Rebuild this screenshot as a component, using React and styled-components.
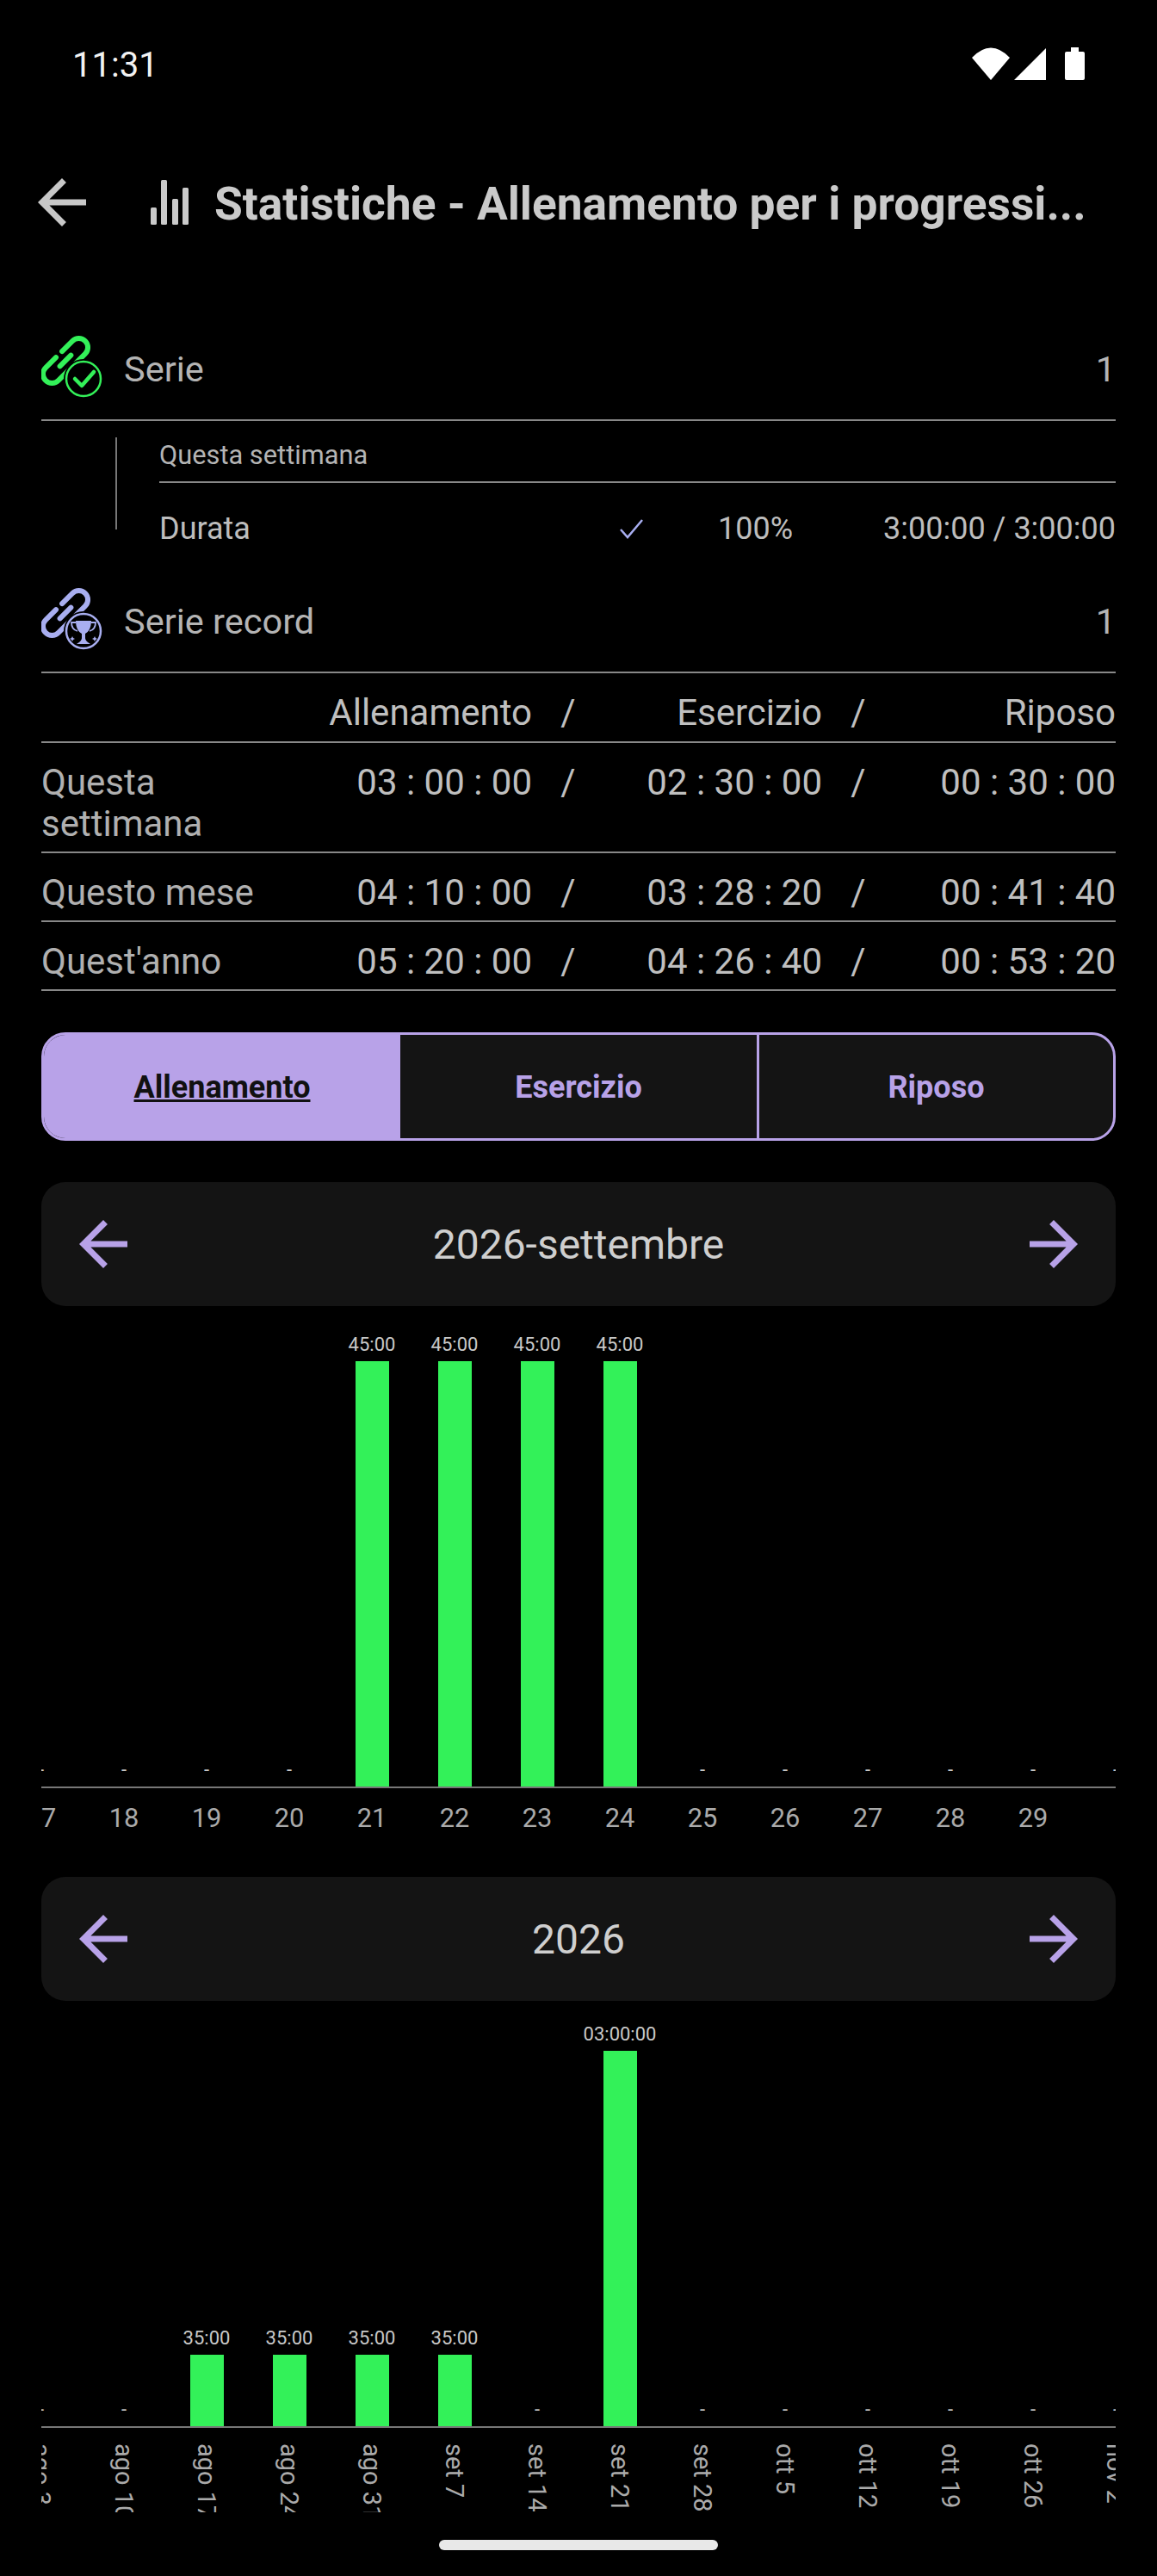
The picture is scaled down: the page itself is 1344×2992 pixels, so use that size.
import React from "react";
import styled, { createGlobalStyle } from "styled-components";

const Global = createGlobalStyle`
  html, body { margin: 0; padding: 0; background: #000; }
  body { font-family: Roboto, "Noto Sans", sans-serif; color: #c4c4c4; }
  * { box-sizing: border-box; }
`;

const Page = styled.div`
  width: 1344px;
  height: 2992px;
  background: #000;
  overflow: hidden;
  display: flex;
  flex-direction: column;
`;

const StatusBar = styled.div`
  height: 150px;
  padding: 0 84px;
  display: flex;
  align-items: center;
  justify-content: space-between;
  color: #f2f2f2;
  font-size: 40px;
`;

const StatusIcons = styled.svg`
  width: 131px;
  height: 150px;
  flex: none;
`;

const AppBar = styled.header`
  height: 172px;
  margin-bottom: 49px;
  padding: 0 0 2px 30px;
  display: flex;
  align-items: center;
`;

const TitleIcon = styled.svg`
  width: 48px;
  height: 52px;
  margin-left: 58px;
  flex: none;
`;

const Title = styled.h1`
  margin: 3px 0 0 29px;
  font-size: 53.3px;
  font-weight: 700;
  color: #cacaca;
  white-space: nowrap;
`;

const Content = styled.main`
  padding: 0 48px;
  display: flex;
  flex-direction: column;
`;

const StatRow = styled.div`
  height: 118px;
  padding-bottom: 1px;
  display: flex;
  align-items: center;
  border-bottom: 2px solid #888;
  font-size: 41.5px;
  color: #b4b4b4;
`;

const RowIcon = styled.svg`
  width: 76px;
  height: 116px;
  margin-right: 20px;
  flex: none;
`;

const RowValue = styled.span`
  margin-left: auto;
`;

const SubBlock = styled.section`
  padding: 19px 0 0 86px;
  display: flex;
  align-items: flex-start;
`;

const SubRule = styled.div`
  width: 2px;
  height: 107px;
  background: #777;
  flex: none;
`;

const SubBody = styled.div`
  margin-left: 49px;
  flex: 1;
`;

const SubHeader = styled.div`
  height: 53px;
  padding-bottom: 11px;
  display: flex;
  align-items: center;
  border-bottom: 2px solid #888;
  font-size: 30.8px;
  color: #b4b4b4;
`;

const DurationRow = styled.div`
  height: 103px;
  padding-top: 3px;
  display: flex;
  align-items: center;
  font-size: 36px;
  color: #bdbdbd;
`;

const DurationLabel = styled.span`
  width: 533px;
  flex: none;
`;

const CheckIcon = styled.svg`
  width: 30px;
  height: 26px;
  flex: none;
`;

const Percent = styled.span`
  margin-left: 86px;
`;

const Duration = styled.span`
  margin-left: auto;
`;

const TableRow = styled.div`
  display: grid;
  grid-template-columns: 290px 280px 84px 253px 84px 257px;
  padding: ${(p) => (p.$head ? "22px 0 9px" : "22px 0 8px")};
  border-bottom: 2px solid #888;
  font-size: 42px;
  line-height: 48px;
  color: #bfbfbf;
`;

const TableCell = styled.span`
  text-align: right;
  white-space: nowrap;
`;

const TableLabel = styled.span`
  color: #b0b0b0;
`;

const TableSlash = styled.span`
  text-align: center;
`;

const Segments = styled.div`
  margin-top: 48px;
  height: 126px;
  border: 3px solid #b8a2e8;
  border-radius: 28px;
  overflow: hidden;
  display: grid;
  grid-template-columns: repeat(3, 1fr);
  background: #141414;
`;

const Segment = styled.div`
  padding-top: 2px;
  display: flex;
  align-items: center;
  justify-content: center;
  font-size: 36px;
  font-weight: 700;
  background: ${(p) => (p.$active ? "#b8a2e8" : "transparent")};
  color: ${(p) => (p.$active ? "#111" : "#b8a2e8")};
  text-decoration: ${(p) => (p.$active ? "underline" : "none")};
  border-left: ${(p) => (p.$divider ? "3px solid #b8a2e8" : "none")};
`;

const NavBar = styled.div`
  margin-top: ${(p) => p.$top}px;
  height: 144px;
  padding: 0 30px;
  background: #141414;
  border-radius: 28px;
  display: flex;
  align-items: center;
  justify-content: space-between;
  font-size: 48px;
  color: #cfcfcf;
`;

const Arrow = styled.svg`
  width: 84px;
  height: 84px;
  color: ${(p) => p.$color};
  flex: none;
  display: block;
`;

const ChartClip = styled.div`
  overflow: hidden;
  width: 1248px;
`;

const Plot = styled.div`
  height: ${(p) => p.$h}px;
  width: 1344px;
  margin-left: -48px;
  display: grid;
  grid-template-columns: repeat(14, 96px);
  align-items: end;
  border-bottom: 2px solid #777;
  box-sizing: content-box;
`;

const Column = styled.div`
  display: flex;
  flex-direction: column;
  align-items: center;
  gap: 6px;
`;

const BarLabel = styled.span`
  font-size: 22px;
  line-height: 26px;
  color: #c8c8c8;
  white-space: nowrap;
`;

const Bar = styled.div`
  width: 39px;
  height: ${(p) => p.$h}px;
  background: #33f159;
`;

const Ticks = styled.div`
  width: 1344px;
  margin-left: -48px;
  display: grid;
  grid-template-columns: repeat(14, 96px);
  padding-top: ${(p) => p.$pad}px;
`;

const Tick = styled.span`
  text-align: center;
  font-size: 30.8px;
  line-height: 34px;
  color: #aaa;
`;

const VTick = styled.span`
  height: 80px;
  overflow: hidden;
  writing-mode: vertical-rl;
  justify-self: center;
  font-size: 29px;
  line-height: 34px;
  color: #aaa;
  white-space: nowrap;
`;

const HomeBar = styled.div`
  position: absolute;
  left: 510px;
  top: 2950px;
  width: 324px;
  height: 12px;
  border-radius: 6px;
  background: #e8e8e8;
`;

const ArrowLeft = ({ color }) => (
  <Arrow $color={color} viewBox="0 0 24 24" fill="currentColor">
    <path d="M20 11H7.83l5.59-5.59L12 4l-8 8 8 8 1.41-1.41L7.83 13H20v-2z" />
  </Arrow>
);

const ArrowRight = ({ color }) => (
  <Arrow $color={color} viewBox="0 0 24 24" fill="currentColor">
    <path d="M12 4l-1.41 1.41L16.17 11H4v2h12.17l-5.58 5.59L12 20l8-8z" />
  </Arrow>
);

const ChainLink = ({ color }) => (
  <g transform="translate(28 27) rotate(-45)" fill="none" stroke={color} strokeWidth="6" strokeLinecap="round">
    <path d="M5 -10.5H22A10.5 10.5 0 0 1 22 10.5H5" />
    <path d="M-5 -10.5H-22A10.5 10.5 0 0 0 -22 10.5H-5" />
    <path d="M-9 0H9" />
  </g>
);

const SeriesIcon = () => (
  <RowIcon viewBox="0 0 76 116">
    <g transform="translate(0 21)">
      <ChainLink color="#33f159" />
      <circle cx="49" cy="48" r="23" fill="#000" />
      <circle cx="49" cy="48" r="20" fill="none" stroke="#33f159" strokeWidth="2.5" />
      <path d="M39 48l8 8 14-16" fill="none" stroke="#33f159" strokeWidth="4.5" strokeLinecap="round" strokeLinejoin="round" />
    </g>
  </RowIcon>
);

const RecordIcon = () => (
  <RowIcon viewBox="0 0 76 116">
    <g transform="translate(0 21)">
      <ChainLink color="#a8aef0" />
      <circle cx="49" cy="48" r="23" fill="#000" />
      <circle cx="49" cy="48" r="20" fill="none" stroke="#a8aef0" strokeWidth="2.5" />
      <path d="M40 36h18c0 8-3 13-7 15v5c0 3 3 5 6 7H41c3-2 6-4 6-7v-5c-4-2-7-7-7-15z" fill="#a8aef0" />
      <path d="M40 38h-5c0 6 3 9 7 10M58 38h5c0 6-3 9-7 10" fill="none" stroke="#a8aef0" strokeWidth="1.8" />
      <path d="M36 54l1 2 2 1-2 1-1 2-1-2-2-1 2-1zM62 54l1 2 2 1-2 1-1 2-1-2-2-1 2-1z" fill="#a8aef0" />
    </g>
  </RowIcon>
);

const rows = [
  ["Questa settimana", "03 : 00 : 00", "02 : 30 : 00", "00 : 30 : 00"],
  ["Questo mese", "04 : 10 : 00", "03 : 28 : 20", "00 : 41 : 40"],
  ["Quest'anno", "05 : 20 : 00", "04 : 26 : 40", "00 : 53 : 20"],
];

const monthBars = [0, 0, 0, 0, 45, 45, 45, 45, 0, 0, 0, 0, 0, 0];
const monthTicks = ["17", "18", "19", "20", "21", "22", "23", "24", "25", "26", "27", "28", "29", ""];
const yearBars = [
  ["-", 0], ["-", 0], ["35:00", 83], ["35:00", 83], ["35:00", 83], ["35:00", 83], ["-", 0],
  ["03:00:00", 436], ["-", 0], ["-", 0], ["-", 0], ["-", 0], ["-", 0], ["-", 0],
];
const yearTicks = [
  "ago 3", "ago 10", "ago 17", "ago 24", "ago 31", "set 7", "set 14",
  "set 21", "set 28", "ott 5", "ott 12", "ott 19", "ott 26", "nov 2",
];

const purple = "#b8a2e8";

export default function App() {
  return (
    <Page>
      <Global />
      <StatusBar>
        <span>11:31</span>
        <StatusIcons viewBox="1129 0 131 150">
          <path d="M1129 67Q1151 44 1173 67L1151 93Z" fill="#fff" />
          <path d="M1215 56V93H1178Z" fill="#fff" />
          <path d="M1244 55h9v5h5a2 2 0 0 1 2 2v29a2 2 0 0 1-2 2h-19a2 2 0 0 1-2-2V62a2 2 0 0 1 2-2h5z" fill="#fff" />
        </StatusIcons>
      </StatusBar>
      <AppBar>
        <ArrowLeft color="#c8c8c8" />
        <TitleIcon viewBox="0 0 48 52">
          <g fill="#cacaca">
            <rect x="3" y="32" width="7" height="20" rx="1.5" />
            <rect x="15" y="0" width="7" height="52" rx="1.5" />
            <rect x="28" y="22" width="7" height="30" rx="1.5" />
            <rect x="40" y="9" width="7" height="43" rx="1.5" />
          </g>
        </TitleIcon>
        <Title>Statistiche - Allenamento per i progressi...</Title>
      </AppBar>
      <Content>
        <StatRow>
          <SeriesIcon />
          Serie
          <RowValue>1</RowValue>
        </StatRow>
        <SubBlock>
          <SubRule />
          <SubBody>
            <SubHeader>Questa settimana</SubHeader>
            <DurationRow>
              <DurationLabel>Durata</DurationLabel>
              <CheckIcon viewBox="0 0 30 26">
                <path d="M3 14l8 9L28 3" fill="none" stroke="#a8aef0" strokeWidth="2.5" />
              </CheckIcon>
              <Percent>100%</Percent>
              <Duration>3:00:00 / 3:00:00</Duration>
            </DurationRow>
          </SubBody>
        </SubBlock>
        <StatRow>
          <RecordIcon />
          Serie record
          <RowValue>1</RowValue>
        </StatRow>
        <TableRow $head>
          <span />
          <TableCell>Allenamento</TableCell>
          <TableSlash>/</TableSlash>
          <TableCell>Esercizio</TableCell>
          <TableSlash>/</TableSlash>
          <TableCell>Riposo</TableCell>
        </TableRow>
        {rows.map(([label, a, b, c]) => (
          <TableRow key={label}>
            <TableLabel>{label}</TableLabel>
            <TableCell>{a}</TableCell>
            <TableSlash>/</TableSlash>
            <TableCell>{b}</TableCell>
            <TableSlash>/</TableSlash>
            <TableCell>{c}</TableCell>
          </TableRow>
        ))}
        <Segments>
          <Segment $active>Allenamento</Segment>
          <Segment>Esercizio</Segment>
          <Segment $divider>Riposo</Segment>
        </Segments>
        <NavBar $top={48}>
          <ArrowLeft color={purple} />
          <span>2026-settembre</span>
          <ArrowRight color={purple} />
        </NavBar>
        <ChartClip>
          <Plot $h={558}>
            {monthBars.map((m, i) => (
              <Column key={i}>
                <BarLabel>{m ? "45:00" : "-"}</BarLabel>
                <Bar $h={m ? 494 : 0} />
              </Column>
            ))}
          </Plot>
          <Ticks $pad={18}>
            {monthTicks.map((t, i) => (
              <Tick key={i}>{t}</Tick>
            ))}
          </Ticks>
        </ChartClip>
        <NavBar $top={51}>
          <ArrowLeft color={purple} />
          <span>2026</span>
          <ArrowRight color={purple} />
        </NavBar>
        <ChartClip>
          <Plot $h={494}>
            {yearBars.map(([l, h], i) => (
              <Column key={i}>
                <BarLabel>{l}</BarLabel>
                <Bar $h={h} />
              </Column>
            ))}
          </Plot>
          <Ticks $pad={18}>
            {yearTicks.map((t) => (
              <VTick key={t}>{t}</VTick>
            ))}
          </Ticks>
        </ChartClip>
      </Content>
      <HomeBar />
    </Page>
  );
}
